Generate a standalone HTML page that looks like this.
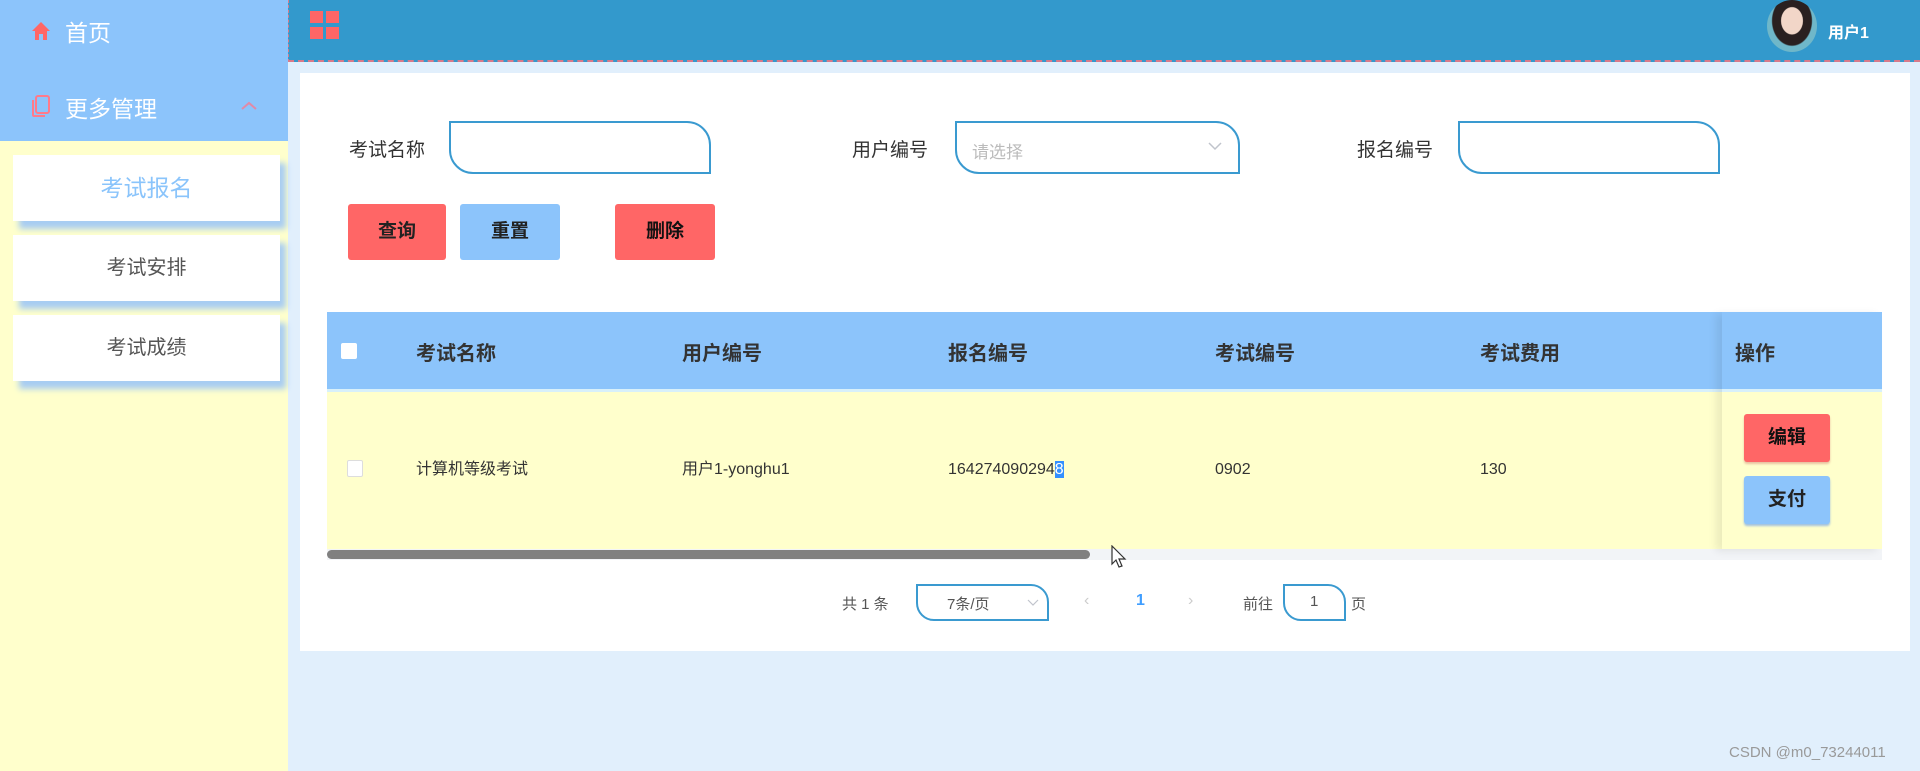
<!DOCTYPE html>
<html><head><meta charset="utf-8"><style>
*{margin:0;padding:0;box-sizing:border-box}
body{width:1920px;height:771px;overflow:hidden;background:#e1effc;font-family:"Liberation Sans","Noto Sans CJK SC",sans-serif;position:relative;color:#333}
.abs{position:absolute}
.side{left:0;top:0;width:288px;height:771px;background:#ffffcc}
.sideTop{left:0;top:0;width:288px;height:141px;background:#8cc4fb}
.mi{color:#fff;font-size:23px}
.sub{left:13px;width:267px;height:66px;background:#fff;box-shadow:6px 8px 6px #a8cdf2;text-align:center;line-height:66px;font-size:20px;color:#555}
.hdr{left:288px;top:0;width:1632px;height:62px;background:#3399cc;border-bottom:2px dashed #d97a8a;border-left:1px dashed #d97a8a}
.card{left:300px;top:73px;width:1610px;height:578px;background:#fff}
.lbl{font-size:19px;color:#333}
.inp{height:53px;border:2px solid #3a9ad0;border-radius:0 24px 0 24px;background:#fff}
.btn{height:56px;line-height:56px;text-align:center;font-size:19px;font-weight:bold;color:#222;border-radius:3px}
.th{font-size:20px;font-weight:bold;color:#333;top:337px}
.td{font-size:16px;color:#333;top:459px;line-height:22px;height:22px}
</style></head><body>
<div class="abs side"></div>
<div class="abs sideTop"></div>
<svg class="abs" style="left:31px;top:21px" width="20" height="20" viewBox="0 0 20 20"><path d="M10 1 L19 10 L16 10 L16 19 L12 19 L12 13 L8 13 L8 19 L4 19 L4 10 L1 10 Z" fill="#ff6666"/></svg>
<div class="abs mi" style="left:65px;top:14px">首页</div>
<svg class="abs" style="left:30px;top:94px" width="22" height="24" viewBox="0 0 22 24"><rect x="6" y="2" width="13" height="17" rx="2" fill="none" stroke="#ff7a8a" stroke-width="2"/><path d="M3 6 L3 21 Q3 22 4 22 L15 22" fill="none" stroke="#ff7a8a" stroke-width="2"/></svg>
<div class="abs mi" style="left:65px;top:90px">更多管理</div>
<svg class="abs" style="left:240px;top:100px" width="18" height="12" viewBox="0 0 18 12"><path d="M2 9 L9 3 L16 9" fill="none" stroke="#e08aa8" stroke-width="2"/></svg>
<div class="abs sub" style="top:155px;color:#8ac4fb;font-size:23px">考试报名</div>
<div class="abs sub" style="top:235px">考试安排</div>
<div class="abs sub" style="top:315px">考试成绩</div>

<div class="abs hdr"></div>
<div class="abs" style="left:310px;top:11px;width:13px;height:12px;background:#ff6666"></div>
<div class="abs" style="left:326px;top:11px;width:13px;height:12px;background:#ff6666"></div>
<div class="abs" style="left:310px;top:27px;width:13px;height:12px;background:#ff6666"></div>
<div class="abs" style="left:326px;top:27px;width:13px;height:12px;background:#ff6666"></div>
<div class="abs" style="left:1767px;top:0;width:50px;height:52px;border-radius:50%;background:radial-gradient(ellipse at 50% 40%,#f2d6c8 0 30%,#2a2020 32% 55%,#6fb7c9 58%)"></div>
<div class="abs" style="left:1828px;top:19px;color:#fff;font-size:16px;font-weight:bold">用户1</div>

<div class="abs card"></div>
<div class="abs lbl" style="left:349px;top:135px">考试名称</div>
<div class="abs inp" style="left:449px;top:121px;width:262px"></div>
<div class="abs lbl" style="left:852px;top:135px">用户编号</div>
<div class="abs inp" style="left:955px;top:121px;width:285px"></div>
<div class="abs" style="left:972px;top:138px;font-size:17px;color:#bbb">请选择</div>
<svg class="abs" style="left:1207px;top:141px" width="16" height="10" viewBox="0 0 16 10"><path d="M2 2 L8 8 L14 2" fill="none" stroke="#c0c4cc" stroke-width="1.5"/></svg>
<div class="abs lbl" style="left:1357px;top:135px">报名编号</div>
<div class="abs inp" style="left:1458px;top:121px;width:262px"></div>

<div class="abs btn" style="left:348px;top:204px;width:98px;background:#ff6666">查询</div>
<div class="abs btn" style="left:460px;top:204px;width:100px;background:#8cc4fb">重置</div>
<div class="abs btn" style="left:615px;top:204px;width:100px;background:#ff6666;color:#111">删除</div>

<div class="abs" style="left:327px;top:312px;width:1555px;height:77px;background:#8cc4fb"></div>
<div class="abs" style="left:327px;top:389px;width:1555px;height:3px;background:#d8f0fa"></div>
<div class="abs" style="left:327px;top:392px;width:1555px;height:157px;background:#ffffcc"></div>
<div class="abs" style="left:327px;top:549px;width:1555px;height:11px;background:#f2f4f7"></div>
<div class="abs" style="left:327px;top:550px;width:763px;height:9px;background:#808080;border-radius:5px"></div>
<div class="abs" style="left:1722px;top:312px;width:160px;height:237px;box-shadow:-6px 2px 8px rgba(0,0,0,0.08)"></div>
<div class="abs" style="left:341px;top:343px;width:16px;height:16px;background:#fff;border-radius:2px"></div>
<div class="abs th" style="left:416px">考试名称</div>
<div class="abs th" style="left:682px">用户编号</div>
<div class="abs th" style="left:948px">报名编号</div>
<div class="abs th" style="left:1215px">考试编号</div>
<div class="abs th" style="left:1480px">考试费用</div>
<div class="abs th" style="left:1735px">操作</div>
<div class="abs" style="left:347px;top:460px;width:16px;height:17px;background:#fff;border:1px solid #ddd;border-radius:2px"></div>
<div class="abs td" style="left:416px">计算机等级考试</div>
<div class="abs td" style="left:682px">用户1-yonghu1</div>
<div class="abs td" style="left:948px">164274090294<span style="background:#3390ff;color:#fff">8</span></div>
<div class="abs td" style="left:1215px">0902</div>
<div class="abs td" style="left:1480px">130</div>
<div class="abs btn" style="left:1744px;top:414px;width:86px;height:48px;line-height:48px;background:#ff6666;color:#111;box-shadow:0 2px 2px #e8c0a0">编辑</div>
<div class="abs btn" style="left:1744px;top:476px;width:86px;height:48px;line-height:48px;background:#8cc4fb;box-shadow:0 2px 2px #a0c0e0">支付</div>
<svg class="abs" style="left:1110px;top:545px" width="20" height="26" viewBox="0 0 20 26"><path d="M2 1 L2 19 L6 15 L9 22 L12 21 L9 14 L15 14 Z" fill="#fff" stroke="#333" stroke-width="1.2"/></svg>

<div class="abs" style="left:842px;top:593px;font-size:15px;color:#555">共 1 条</div>
<div class="abs" style="left:916px;top:584px;width:133px;height:37px;border:2px solid #3a9ad0;border-radius:0 18px 0 18px"></div>
<div class="abs" style="left:947px;top:593px;font-size:15px;color:#555">7条/页</div>
<svg class="abs" style="left:1027px;top:599px" width="12" height="8" viewBox="0 0 12 8"><path d="M1 1 L6 6 L11 1" fill="none" stroke="#c0c4cc" stroke-width="1.2"/></svg>
<div class="abs" style="left:1084px;top:592px;font-size:16px;color:#ccc">‹</div>
<div class="abs" style="left:1136px;top:592px;font-size:16px;font-weight:bold;color:#409eff">1</div>
<div class="abs" style="left:1188px;top:592px;font-size:16px;color:#ccc">›</div>
<div class="abs" style="left:1243px;top:593px;font-size:15px;color:#555">前往</div>
<div class="abs" style="left:1283px;top:584px;width:63px;height:37px;border:2px solid #3a9ad0;border-radius:0 18px 0 18px"></div>
<div class="abs" style="left:1310px;top:593px;font-size:15px;color:#555">1</div>
<div class="abs" style="left:1351px;top:593px;font-size:15px;color:#555">页</div>
<div class="abs" style="left:1729px;top:744px;font-size:15px;color:#999">CSDN @m0_73244011</div>
</body></html>
